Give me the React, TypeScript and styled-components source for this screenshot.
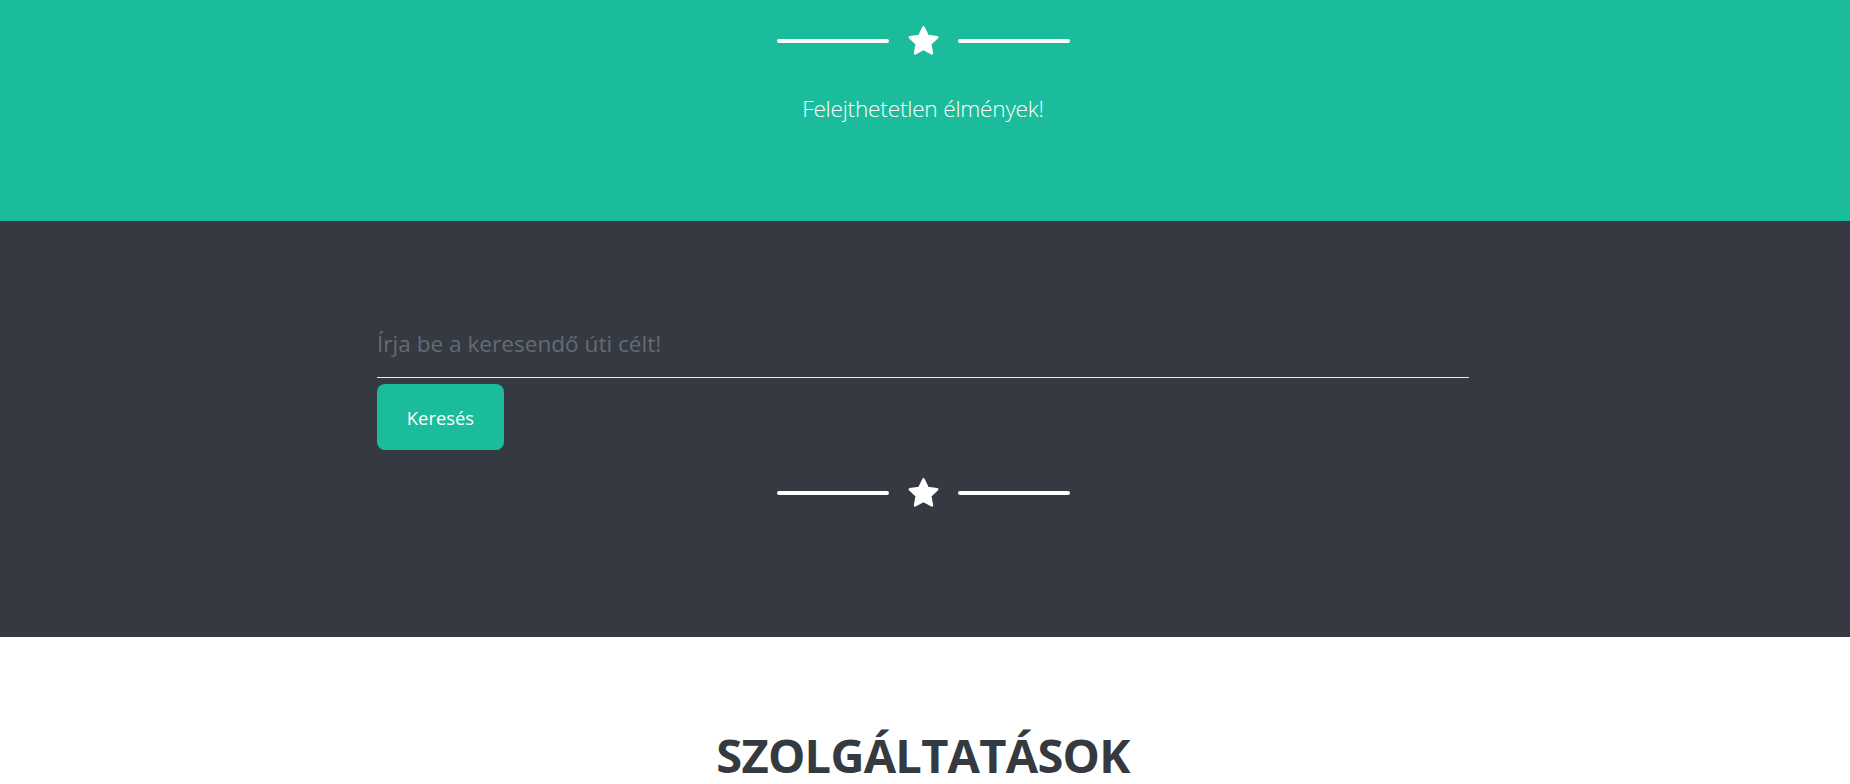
import React from "react";
import styled, { createGlobalStyle } from "styled-components";

const GlobalStyle = createGlobalStyle`
  html, body { margin: 0; padding: 0; }
  body {
    font-family: "Open Sans", "Noto Sans", "Liberation Sans", sans-serif;
    background: #ffffff;
    overflow: hidden;
  }
  * { box-sizing: border-box; }
`;

const Page = styled.div`
  width: 100%;
  display: flex;
  flex-direction: column;
`;

const Masthead = styled.header`
  background: #1abc9c;
  color: #ffffff;
  height: 221px;
  padding: 24px 4px 0 0;
  display: flex;
  flex-direction: column;
  align-items: center;
`;

const Divider = styled.div<{ $tone: string }>`
  display: flex;
  align-items: center;
  justify-content: center;
  gap: 17px;
  height: 34px;
  color: ${(p) => p.$tone};
`;

const DividerLine = styled.span<{ $tone: string }>`
  display: block;
  width: 112px;
  height: 4px;
  border-radius: 2px;
  background: ${(p) => p.$tone};
`;

const StarIcon = styled.svg`
  width: 35px;
  height: 35px;
  display: block;
`;

const Subheading = styled.p`
  margin: 33px 0 0;
  font-size: 22.6px;
  font-weight: 300;
  line-height: 36px;
  letter-spacing: -0.2px;
`;

const SearchSection = styled.section`
  background: #353942;
  height: 416px;
  padding: 96px 4px 0 0;
  display: flex;
  flex-direction: column;
  align-items: center;
`;

const SearchForm = styled.form`
  width: 1092px;
  display: flex;
  flex-direction: column;
  align-items: flex-start;
  gap: 6px;
`;

const SearchInput = styled.input`
  width: 100%;
  height: 61px;
  padding: 0 0 8px;
  border: none;
  border-bottom: 1px solid #e9ecef;
  background: transparent;
  color: #ffffff;
  font-family: inherit;
  font-size: 22.6px;
  outline: none;
  &::placeholder {
    color: #646b74;
    opacity: 1;
  }
`;

const SearchButton = styled.button`
  width: 127px;
  height: 66px;
  border: none;
  border-radius: 8px;
  background: #1abc9c;
  color: #ffffff;
  font-family: inherit;
  font-size: 18.4px;
  cursor: pointer;
`;

const DividerWrap = styled.div`
  margin-top: 26px;
`;

const Services = styled.section`
  padding: 90px 4px 0 0;
  display: flex;
  justify-content: center;
`;

const ServicesTitle = styled.h2`
  margin: 0;
  font-size: 47px;
  font-weight: 700;
  line-height: 1.2;
  color: #343a40;
  letter-spacing: -0.75px;
`;

const Star: React.FC = () => (
  <StarIcon viewBox="0 0 34 34" aria-hidden="true">
    <path
      d="M17 3.2 L21.1 11.6 L30.3 12.9 L23.6 19.4 L25.2 28.6 L17 24.3 L8.8 28.6 L10.4 19.4 L3.7 12.9 L12.9 11.6 Z"
      fill="currentColor"
      stroke="currentColor"
      strokeWidth="2.4"
      strokeLinejoin="round"
    />
  </StarIcon>
);

const StarDivider: React.FC<{ tone: string }> = ({ tone }) => (
  <Divider $tone={tone}>
    <DividerLine $tone={tone} />
    <Star />
    <DividerLine $tone={tone} />
  </Divider>
);

export default function App() {
  return (
    <Page>
      <GlobalStyle />
      <Masthead>
        <StarDivider tone="#ffffff" />
        <Subheading>Felejthetetlen élmények!</Subheading>
      </Masthead>
      <SearchSection>
        <SearchForm onSubmit={(e) => e.preventDefault()}>
          <SearchInput type="text" placeholder="Írja be a keresendő úti célt!" />
          <SearchButton type="submit">Keresés</SearchButton>
        </SearchForm>
        <DividerWrap>
          <StarDivider tone="#ffffff" />
        </DividerWrap>
      </SearchSection>
      <Services>
        <ServicesTitle>SZOLGÁLTATÁSOK</ServicesTitle>
      </Services>
    </Page>
  );
}
